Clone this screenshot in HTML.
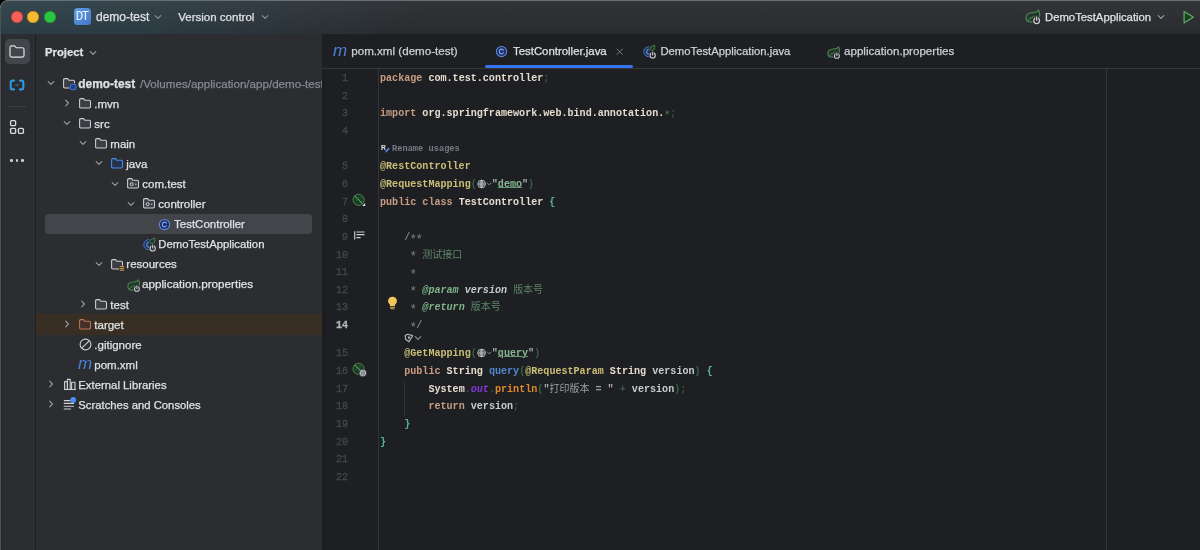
<!DOCTYPE html>
<html><head><meta charset="utf-8"><title>demo-test</title>
<style>
*{box-sizing:border-box;margin:0;padding:0}
html,body{width:1200px;height:550px;overflow:hidden;background:#1e1f22}
body{position:relative;font-family:"Liberation Sans","Noto Sans CJK SC",sans-serif;font-size:11.5px;color:#dfe1e5}
.abs,.t,.row,.code,.ln,svg{position:absolute}
#w{position:absolute;left:0;top:0;width:1200px;height:550px;will-change:transform}
#title{left:0;top:0;width:1200px;height:33.6px;background:linear-gradient(180deg,rgba(255,255,255,.035),rgba(0,0,0,.05)),linear-gradient(90deg,#2f4149 0,#2e3d45 150px,#2c343a 300px,#2b2d30 420px)}
#stripe{left:0;top:34px;width:36px;height:516px;background:linear-gradient(90deg,#27282b 1px,#2b2d30 6px);border-right:1px solid #1e1f22}
#proj{left:36px;top:34px;width:286px;height:516px;background:#2b2d30}
#editor{left:322px;top:34px;width:878px;height:516px;background:#1e1f22}
.t{white-space:nowrap;line-height:20px;height:20px;-webkit-text-stroke:.25px}
.code{font-family:"Liberation Mono","Noto Sans CJK SC",monospace;font-size:10.08px;font-weight:bold;white-space:pre;left:380px;height:18px;line-height:18px;color:#e6ddd0}
.ln{font-family:"Liberation Mono",monospace;font-size:10px;color:#4e535b;-webkit-text-stroke:.3px;width:24px;text-align:right;left:324px;height:18px;line-height:18px}
.k{color:#c79d84}.a{color:#cbbf78}.b{color:#52b5a2}.v{color:#c8cbd0}.p{color:#33623f}.s{color:#3d5645}.q{color:#adb0b5}
.u{color:#86b592;text-decoration:underline;text-decoration-thickness:.8px;text-underline-offset:.3px;text-decoration-color:#6a9576}.m{color:#4f88d0}.o{color:#e08a2a}.f{color:#8538d8;font-style:italic}
.g{color:#9a9da3}.c{color:#7e8388}.d{color:#5c8567}.dt{color:#7db389;font-style:italic}.dv{color:#c5cace;font-style:italic}
.cj{font-size:10px;font-weight:normal}
.st{display:inline-block;width:6.048px;font-size:12.5px;line-height:1;position:relative;top:2.7px;left:-.7px;font-weight:normal}.s2{color:#3f7a4d}
.dim{color:#6f737a}
</style></head><body><div id="w">
<div id="title" class="abs"></div>
<div id="stripe" class="abs"></div>
<div id="proj" class="abs"></div>
<div id="editor" class="abs"></div>
<div class="abs" style="left:0;top:0;width:1200px;height:1px;background:#687073"></div>
<div class="abs" style="left:10.6px;top:10.8px;width:12px;height:12px;border-radius:50%;background:#f6605a;box-shadow:inset 0 0 0 .6px #a3352f"></div>
<div class="abs" style="left:27.4px;top:10.8px;width:12px;height:12px;border-radius:50%;background:#f6bb33;box-shadow:inset 0 0 0 .6px #a87c1c"></div>
<div class="abs" style="left:44.1px;top:10.8px;width:12px;height:12px;border-radius:50%;background:#2ac541;box-shadow:inset 0 0 0 .6px #1b8a2b"></div>
<div class="abs" style="left:74px;top:8px;width:17px;height:17px;border-radius:3.5px;background:linear-gradient(135deg,#5b9ee2,#4878c6);color:#eef3fa;font:12.4px/19.6px 'Liberation Mono',monospace;text-align:center;letter-spacing:-1.4px;text-indent:-1.4px">DT</div>
<div class="t" style="left:96px;top:6.7px;font-size:12px">demo-test</div>
<svg style="left:153px;top:12.0px" width="10" height="10" viewBox="0 0 10 10"><path d="M2.2 3.7 L5 6.4 L7.8 3.7" fill="none" stroke="#8f9399" stroke-width="1.1" stroke-linecap="round" stroke-linejoin="round"/></svg>
<div class="t" style="left:178.3px;top:6.7px;font-size:11.5px">Version control</div>
<svg style="left:260px;top:12.0px" width="10" height="10" viewBox="0 0 10 10"><path d="M2.2 3.7 L5 6.4 L7.8 3.7" fill="none" stroke="#8f9399" stroke-width="1.1" stroke-linecap="round" stroke-linejoin="round"/></svg>
<div class="t" style="left:1045px;top:6.7px;font-size:11.3px">DemoTestApplication</div>
<svg style="left:1156px;top:12.0px" width="10" height="10" viewBox="0 0 10 10"><path d="M2.2 3.7 L5 6.4 L7.8 3.7" fill="none" stroke="#9da0a8" stroke-width="1.1" stroke-linecap="round" stroke-linejoin="round"/></svg>
<svg style="left:1182px;top:9.6px" width="14" height="14" viewBox="0 0 14 14"><path d="M2.1 1.6 L11.4 7.2 L2.1 12.8 Z" fill="#183f1e" stroke="#5a9b62" stroke-width="1.4" stroke-linejoin="round"/></svg>
<svg style="left:1024.6px;top:9.4px" width="16.5" height="16.5" viewBox="0 0 15 15"><path d="M12.3 0.9 C11.2 2.6 9.4 3.2 7 3.3 C3.7 3.4 0.9 5.1 0.9 8 C0.9 10.5 3 11.9 5.6 11.9 C9.6 11.9 13.2 9.6 13.4 5.6 C13.5 3.8 13.1 2.2 12.3 0.9 Z" fill="#21382a" stroke="#4c8452" stroke-width="1.15" stroke-linejoin="round"/><path d="M2.6 10.7 C4 8.5 6.6 7.2 9.6 6.8" fill="none" stroke="#4c8452" stroke-width="1" stroke-linecap="round"/><circle cx="10.6" cy="10.4" r="3.9" fill="#2b2d30"/><circle cx="10.6" cy="10.6" r="2.6" fill="none" stroke="#ced0d6" stroke-width="1.1"/><path d="M10.6 6.6 V10" stroke="#2b2d30" stroke-width="2.6"/><path d="M10.6 7.2 V10.2" stroke="#ced0d6" stroke-width="1.1" stroke-linecap="round"/></svg>
<div class="abs" style="left:4.5px;top:38.8px;width:25px;height:25.2px;border-radius:5px;background:#43454a"></div>
<svg style="left:9px;top:44.8px" width="16" height="13" viewBox="0 0 16 14" preserveAspectRatio="none"><path d="M1 2.6 C1 1.7 1.7 1 2.6 1 H5.6 L7.4 3 H13.4 C14.3 3 15 3.7 15 4.6 V11.4 C15 12.3 14.3 13 13.4 13 H2.6 C1.7 13 1 12.3 1 11.4 Z" fill="none" stroke="#dfe1e5" stroke-width="1.2" stroke-linejoin="round"/></svg>
<svg style="left:9px;top:78.6px" width="16" height="12" viewBox="0 0 16 12"><g fill="none" stroke="#2f97dc" stroke-width="2.1" stroke-linecap="round" stroke-linejoin="round"><path d="M5 1.6 H3.4 C2.4 1.6 1.7 2.3 1.7 3.3 V8.7 C1.7 9.7 2.4 10.4 3.4 10.4 H5"/><path d="M11 1.6 H12.6 C13.6 1.6 14.3 2.3 14.3 3.3 V8.7 C14.3 9.7 13.6 10.4 12.6 10.4 H11"/></g><path d="M6.8 6 H9.2" stroke="#2a6fa3" stroke-width="1.3" stroke-linecap="round"/></svg>
<div class="abs" style="left:8px;top:106px;width:18px;height:1px;background:#3c3e43"></div>
<svg style="left:9px;top:119px" width="16" height="16" viewBox="0 0 16 16"><g fill="none" stroke="#d6d8dd" stroke-width="1.4"><rect x="1.6" y="1.6" width="5" height="5" rx="1.2"/><rect x="1.6" y="9.4" width="5" height="5" rx="1.2"/><rect x="9.4" y="9.4" width="5" height="5" rx="1.2"/></g></svg>
<div class="abs" style="left:10.4px;top:159.2px;width:2.7px;height:2.7px;border-radius:50%;background:#ced0d6"></div>
<div class="abs" style="left:15.7px;top:159.2px;width:2.7px;height:2.7px;border-radius:50%;background:#ced0d6"></div>
<div class="abs" style="left:21.0px;top:159.2px;width:2.7px;height:2.7px;border-radius:50%;background:#ced0d6"></div>
<div class="t" style="left:45px;top:42.0px;font-weight:bold;font-size:11.3px;color:#dfe1e5">Project</div>
<svg style="left:88px;top:47.5px" width="10" height="10" viewBox="0 0 10 10"><path d="M2.2 3.7 L5 6.4 L7.8 3.7" fill="none" stroke="#9da0a8" stroke-width="1.1" stroke-linecap="round" stroke-linejoin="round"/></svg>
<div class="abs" style="left:44.5px;top:213.8px;width:267.3px;height:20px;border-radius:3.5px;background:#43454a"></div>
<div class="abs" style="left:36px;top:314.3px;width:286px;height:20.6px;background:#392e23"></div>
<svg style="left:46px;top:78.1px" width="10" height="10" viewBox="0 0 10 10"><path d="M2.2 3.7 L5 6.4 L7.8 3.7" fill="none" stroke="#9da0a8" stroke-width="1.1" stroke-linecap="round" stroke-linejoin="round"/></svg>
<svg style="left:63px;top:77.8px" width="14" height="13" viewBox="0 0 14 13"><path d="M0.6 1.8 Q0.6 0.6 1.8 0.6 H4.5 L6 2.3 H10.3 Q11.5 2.3 11.5 3.5 V8.8 Q11.5 10 10.3 10 H1.8 Q0.6 10 0.6 8.8 Z" fill="#3c3e43" stroke="#ced0d6" stroke-width="1.05" stroke-linejoin="round"/><rect x="7.2" y="6" width="6" height="6" rx="2" fill="#2b2d30" stroke="#2b2d30" stroke-width="1.6"/><rect x="7.4" y="6.2" width="5.6" height="5.6" rx="1.8" fill="#1f3f86" stroke="#3f78d8" stroke-width="1.1"/></svg>
<div class="t" style="left:78.3px;top:73.6px;font-size:11.9px"><b>demo-test</b></div>
<div class="t" style="left:140px;top:73.6px;color:#868a91;font-size:11.6px;width:182px;overflow:hidden">/Volumes/application/app/demo-test</div>
<svg style="left:62px;top:98.2px" width="10" height="10" viewBox="0 0 10 10"><path d="M3.7 2.2 L6.4 5 L3.7 7.8" fill="none" stroke="#9da0a8" stroke-width="1.1" stroke-linecap="round" stroke-linejoin="round"/></svg>
<svg style="left:79px;top:97.9px" width="14" height="13" viewBox="0 0 14 13"><path d="M0.6 1.8 Q0.6 0.6 1.8 0.6 H4.5 L6 2.3 H10.3 Q11.5 2.3 11.5 3.5 V8.8 Q11.5 10 10.3 10 H1.8 Q0.6 10 0.6 8.8 Z" fill="#3c3e43" stroke="#ced0d6" stroke-width="1.05" stroke-linejoin="round"/></svg>
<div class="t" style="left:94.3px;top:93.7px;">.mvn</div>
<svg style="left:62px;top:118.3px" width="10" height="10" viewBox="0 0 10 10"><path d="M2.2 3.7 L5 6.4 L7.8 3.7" fill="none" stroke="#9da0a8" stroke-width="1.1" stroke-linecap="round" stroke-linejoin="round"/></svg>
<svg style="left:79px;top:118.0px" width="14" height="13" viewBox="0 0 14 13"><path d="M0.6 1.8 Q0.6 0.6 1.8 0.6 H4.5 L6 2.3 H10.3 Q11.5 2.3 11.5 3.5 V8.8 Q11.5 10 10.3 10 H1.8 Q0.6 10 0.6 8.8 Z" fill="#3c3e43" stroke="#ced0d6" stroke-width="1.05" stroke-linejoin="round"/></svg>
<div class="t" style="left:94.3px;top:113.8px;">src</div>
<svg style="left:78px;top:138.3px" width="10" height="10" viewBox="0 0 10 10"><path d="M2.2 3.7 L5 6.4 L7.8 3.7" fill="none" stroke="#9da0a8" stroke-width="1.1" stroke-linecap="round" stroke-linejoin="round"/></svg>
<svg style="left:95px;top:138.0px" width="14" height="13" viewBox="0 0 14 13"><path d="M0.6 1.8 Q0.6 0.6 1.8 0.6 H4.5 L6 2.3 H10.3 Q11.5 2.3 11.5 3.5 V8.8 Q11.5 10 10.3 10 H1.8 Q0.6 10 0.6 8.8 Z" fill="#3c3e43" stroke="#ced0d6" stroke-width="1.05" stroke-linejoin="round"/></svg>
<div class="t" style="left:110.3px;top:133.8px;">main</div>
<svg style="left:94px;top:158.4px" width="10" height="10" viewBox="0 0 10 10"><path d="M2.2 3.7 L5 6.4 L7.8 3.7" fill="none" stroke="#9da0a8" stroke-width="1.1" stroke-linecap="round" stroke-linejoin="round"/></svg>
<svg style="left:111px;top:158.1px" width="14" height="13" viewBox="0 0 14 13"><path d="M0.6 1.8 Q0.6 0.6 1.8 0.6 H4.5 L6 2.3 H10.3 Q11.5 2.3 11.5 3.5 V8.8 Q11.5 10 10.3 10 H1.8 Q0.6 10 0.6 8.8 Z" fill="#25324d" stroke="#4b8df0" stroke-width="1.05" stroke-linejoin="round"/></svg>
<div class="t" style="left:126.3px;top:153.9px;">java</div>
<svg style="left:110px;top:178.5px" width="10" height="10" viewBox="0 0 10 10"><path d="M2.2 3.7 L5 6.4 L7.8 3.7" fill="none" stroke="#9da0a8" stroke-width="1.1" stroke-linecap="round" stroke-linejoin="round"/></svg>
<svg style="left:127px;top:178.2px" width="14" height="13" viewBox="0 0 14 13"><path d="M0.6 1.8 Q0.6 0.6 1.8 0.6 H4.5 L6 2.3 H10.3 Q11.5 2.3 11.5 3.5 V8.8 Q11.5 10 10.3 10 H1.8 Q0.6 10 0.6 8.8 Z" fill="#3c3e43" stroke="#ced0d6" stroke-width="1.05" stroke-linejoin="round"/><circle cx="4.7" cy="6.2" r="1.5" fill="none" stroke="#ced0d6" stroke-width="1"/><circle cx="8.8" cy="6.3" r=".7" fill="#ced0d6"/></svg>
<div class="t" style="left:142.3px;top:174.0px;">com.test</div>
<svg style="left:126px;top:198.6px" width="10" height="10" viewBox="0 0 10 10"><path d="M2.2 3.7 L5 6.4 L7.8 3.7" fill="none" stroke="#9da0a8" stroke-width="1.1" stroke-linecap="round" stroke-linejoin="round"/></svg>
<svg style="left:143px;top:198.3px" width="14" height="13" viewBox="0 0 14 13"><path d="M0.6 1.8 Q0.6 0.6 1.8 0.6 H4.5 L6 2.3 H10.3 Q11.5 2.3 11.5 3.5 V8.8 Q11.5 10 10.3 10 H1.8 Q0.6 10 0.6 8.8 Z" fill="#3c3e43" stroke="#ced0d6" stroke-width="1.05" stroke-linejoin="round"/><circle cx="4.7" cy="6.2" r="1.5" fill="none" stroke="#ced0d6" stroke-width="1"/><circle cx="8.8" cy="6.3" r=".7" fill="#ced0d6"/></svg>
<div class="t" style="left:158.3px;top:194.1px;">controller</div>
<svg style="left:157.9px;top:217.5px" width="13" height="13" viewBox="0 0 13 13"><circle cx="6.5" cy="6.5" r="5.1" fill="#1a2f68" stroke="#6389d6" stroke-width="1.05"/><path d="M8.4 5.2 C8 4.5 7.4 4.1 6.6 4.1 C5.3 4.1 4.4 5.1 4.4 6.5 C4.4 7.9 5.3 8.9 6.6 8.9 C7.4 8.9 8 8.5 8.4 7.8" fill="none" stroke="#86a6e6" stroke-width="1.1" stroke-linecap="round"/></svg>
<div class="t" style="left:174px;top:214.2px;">TestController</div>
<svg style="left:143px;top:236.7px" width="16" height="16" viewBox="0 0 16 16"><circle cx="5.8" cy="7.7" r="5" fill="#243152" stroke="#4178d6" stroke-width="1"/><path d="M7.6 6.3 C7.2 5.6 6.6 5.3 5.9 5.3 C4.7 5.3 3.8 6.3 3.8 7.7 C3.8 9.1 4.7 10.1 5.9 10.1 C6.6 10.1 7.2 9.8 7.6 9.1" fill="none" stroke="#5f97ee" stroke-width="1.1" stroke-linecap="round"/><path d="M8 2.6 C9.4 2.4 10.6 1.8 11.4 0.8 C12.3 2.6 12 4.8 10.6 6.1 C9.4 7.1 7.7 6.7 7.1 5.5 C6.6 4.5 7 3.2 8 2.6 Z" fill="#21382a" stroke="#2b2d30" stroke-width="2.4"/><path d="M8 2.6 C9.4 2.4 10.6 1.8 11.4 0.8 C12.3 2.6 12 4.8 10.6 6.1 C9.4 7.1 7.7 6.7 7.1 5.5 C6.6 4.5 7 3.2 8 2.6 Z" fill="#21382a" stroke="#4c8452" stroke-width=".9" stroke-linejoin="round"/><circle cx="9.7" cy="11.2" r="3.9" fill="#2b2d30"/><circle cx="9.7" cy="11.4" r="2.6" fill="none" stroke="#ced0d6" stroke-width="1.1"/><path d="M9.7 7.4 V10.8" stroke="#2b2d30" stroke-width="2.6"/><path d="M9.7 8 V11" stroke="#ced0d6" stroke-width="1.1" stroke-linecap="round"/></svg>
<div class="t" style="left:158.3px;top:234.2px;font-size:11.3px">DemoTestApplication</div>
<svg style="left:94px;top:258.8px" width="10" height="10" viewBox="0 0 10 10"><path d="M2.2 3.7 L5 6.4 L7.8 3.7" fill="none" stroke="#9da0a8" stroke-width="1.1" stroke-linecap="round" stroke-linejoin="round"/></svg>
<svg style="left:111px;top:258.5px" width="14" height="13" viewBox="0 0 14 13"><path d="M0.6 1.8 Q0.6 0.6 1.8 0.6 H4.5 L6 2.3 H10.3 Q11.5 2.3 11.5 3.5 V8.8 Q11.5 10 10.3 10 H1.8 Q0.6 10 0.6 8.8 Z" fill="#3c3e43" stroke="#ced0d6" stroke-width="1.05" stroke-linejoin="round"/><rect x="8" y="6.6" width="5.6" height="5.6" fill="#2b2d30"/><g stroke="#d9a343" stroke-width="1"><path d="M8.6 7.6 H13.2 M8.6 9.4 H13.2 M8.6 11.2 H13.2"/></g></svg>
<div class="t" style="left:126.3px;top:254.3px;">resources</div>
<svg style="left:127px;top:278.8px" width="14" height="14" viewBox="0 0 15 15"><path d="M12.3 0.9 C11.2 2.6 9.4 3.2 7 3.3 C3.7 3.4 0.9 5.1 0.9 8 C0.9 10.5 3 11.9 5.6 11.9 C9.6 11.9 13.2 9.6 13.4 5.6 C13.5 3.8 13.1 2.2 12.3 0.9 Z" fill="#21382a" stroke="#4c8452" stroke-width="1.15" stroke-linejoin="round"/><path d="M2.6 10.7 C4 8.5 6.6 7.2 9.6 6.8" fill="none" stroke="#4c8452" stroke-width="1" stroke-linecap="round"/><circle cx="10.6" cy="10.4" r="3.9" fill="#2b2d30"/><circle cx="10.6" cy="10.6" r="2.6" fill="none" stroke="#ced0d6" stroke-width="1.1"/><path d="M10.6 6.6 V10" stroke="#2b2d30" stroke-width="2.6"/><path d="M10.6 7.2 V10.2" stroke="#ced0d6" stroke-width="1.1" stroke-linecap="round"/></svg>
<div class="t" style="left:142px;top:274.4px;font-size:11.7px">application.properties</div>
<svg style="left:78px;top:299.0px" width="10" height="10" viewBox="0 0 10 10"><path d="M3.7 2.2 L6.4 5 L3.7 7.8" fill="none" stroke="#9da0a8" stroke-width="1.1" stroke-linecap="round" stroke-linejoin="round"/></svg>
<svg style="left:95px;top:298.7px" width="14" height="13" viewBox="0 0 14 13"><path d="M0.6 1.8 Q0.6 0.6 1.8 0.6 H4.5 L6 2.3 H10.3 Q11.5 2.3 11.5 3.5 V8.8 Q11.5 10 10.3 10 H1.8 Q0.6 10 0.6 8.8 Z" fill="#3c3e43" stroke="#ced0d6" stroke-width="1.05" stroke-linejoin="round"/></svg>
<div class="t" style="left:110.3px;top:294.5px;">test</div>
<svg style="left:62px;top:319.1px" width="10" height="10" viewBox="0 0 10 10"><path d="M3.7 2.2 L6.4 5 L3.7 7.8" fill="none" stroke="#9da0a8" stroke-width="1.1" stroke-linecap="round" stroke-linejoin="round"/></svg>
<svg style="left:79px;top:318.8px" width="14" height="13" viewBox="0 0 14 13"><path d="M0.6 1.8 Q0.6 0.6 1.8 0.6 H4.5 L6 2.3 H10.3 Q11.5 2.3 11.5 3.5 V8.8 Q11.5 10 10.3 10 H1.8 Q0.6 10 0.6 8.8 Z" fill="#43312a" stroke="#bb7850" stroke-width="1.05" stroke-linejoin="round"/></svg>
<div class="t" style="left:94.3px;top:314.6px;">target</div>
<svg style="left:79px;top:337.6px" width="13" height="13" viewBox="0 0 13 13"><circle cx="6.5" cy="6.5" r="5.4" fill="none" stroke="#ced0d6" stroke-width="1.1"/><path d="M2.8 10.2 L10.2 2.8" stroke="#ced0d6" stroke-width="1.1"/></svg>
<div class="t" style="left:94.3px;top:334.6px;">.gitignore</div>
<div class="t" style="left:78px;top:354.2px;font:italic 17px/20px 'Liberation Sans',sans-serif;color:#4c7fd8;letter-spacing:-.5px;-webkit-text-stroke:0">m</div>
<div class="t" style="left:94.3px;top:354.7px;">pom.xml</div>
<svg style="left:46px;top:379.3px" width="10" height="10" viewBox="0 0 10 10"><path d="M3.7 2.2 L6.4 5 L3.7 7.8" fill="none" stroke="#9da0a8" stroke-width="1.1" stroke-linecap="round" stroke-linejoin="round"/></svg>
<svg style="left:63px;top:377.8px" width="14" height="13" viewBox="0 0 14 13"><g fill="none" stroke="#ced0d6" stroke-width="1.1" stroke-linejoin="round"><path d="M1 11.5 H13"/><rect x="1.6" y="3.6" width="2.8" height="7.9"/><rect x="4.4" y="1.4" width="2.8" height="10.1"/><rect x="8.6" y="4.2" width="3.4" height="7.3"/></g></svg>
<div class="t" style="left:78.3px;top:374.8px;font-size:11.35px">External Libraries</div>
<svg style="left:46px;top:399.4px" width="10" height="10" viewBox="0 0 10 10"><path d="M3.7 2.2 L6.4 5 L3.7 7.8" fill="none" stroke="#9da0a8" stroke-width="1.1" stroke-linecap="round" stroke-linejoin="round"/></svg>
<svg style="left:63px;top:396.9px" width="14" height="14" viewBox="0 0 14 14"><g stroke="#ced0d6" stroke-width="1.1" stroke-linecap="round"><path d="M1.2 3.6 H7 M1.2 6.4 H10.6 M1.2 9.2 H10.6 M1.2 12 H7.6"/></g><circle cx="10.2" cy="3" r="2.9" fill="#4b8df0"/></svg>
<div class="t" style="left:78.3px;top:394.9px;font-size:11.3px">Scratches and Consoles</div>
<div class="abs" style="left:322px;top:68px;width:878px;height:1px;background:#35373b"></div>
<div class="abs" style="left:484.5px;top:65px;width:148.5px;height:3px;border-radius:1.5px;background:#3574f0"></div>
<div class="t" style="left:333px;top:40.5px;font:italic 17px/20px 'Liberation Sans',sans-serif;color:#4c7fd8;letter-spacing:-.5px;-webkit-text-stroke:0">m</div>
<div class="t" style="left:351.3px;top:41.1px;font-size:11.6px;color:#ced0d6">pom.xml (demo-test)</div>
<svg style="left:494.7px;top:44.7px" width="13" height="13" viewBox="0 0 13 13"><circle cx="6.5" cy="6.5" r="5.1" fill="#1a2f68" stroke="#6389d6" stroke-width="1.05"/><path d="M8.4 5.2 C8 4.5 7.4 4.1 6.6 4.1 C5.3 4.1 4.4 5.1 4.4 6.5 C4.4 7.9 5.3 8.9 6.6 8.9 C7.4 8.9 8 8.5 8.4 7.8" fill="none" stroke="#86a6e6" stroke-width="1.1" stroke-linecap="round"/></svg>
<div class="t" style="left:513px;top:41.1px;font-size:11.4px;color:#dfe1e5">TestController.java</div>
<svg style="left:616px;top:48px" width="8" height="8" viewBox="0 0 8 8"><path d="M1 1 L6.4 6.4 M6.4 1 L1 6.4" stroke="#767a81" stroke-width="1" stroke-linecap="round"/></svg>
<svg style="left:643px;top:44.0px" width="16" height="16" viewBox="0 0 16 16"><circle cx="5.8" cy="7.7" r="5" fill="#243152" stroke="#4178d6" stroke-width="1"/><path d="M7.6 6.3 C7.2 5.6 6.6 5.3 5.9 5.3 C4.7 5.3 3.8 6.3 3.8 7.7 C3.8 9.1 4.7 10.1 5.9 10.1 C6.6 10.1 7.2 9.8 7.6 9.1" fill="none" stroke="#5f97ee" stroke-width="1.1" stroke-linecap="round"/><path d="M8 2.6 C9.4 2.4 10.6 1.8 11.4 0.8 C12.3 2.6 12 4.8 10.6 6.1 C9.4 7.1 7.7 6.7 7.1 5.5 C6.6 4.5 7 3.2 8 2.6 Z" fill="#21382a" stroke="#1e1f22" stroke-width="2.4"/><path d="M8 2.6 C9.4 2.4 10.6 1.8 11.4 0.8 C12.3 2.6 12 4.8 10.6 6.1 C9.4 7.1 7.7 6.7 7.1 5.5 C6.6 4.5 7 3.2 8 2.6 Z" fill="#21382a" stroke="#4c8452" stroke-width=".9" stroke-linejoin="round"/><circle cx="9.7" cy="11.2" r="3.9" fill="#1e1f22"/><circle cx="9.7" cy="11.4" r="2.6" fill="none" stroke="#ced0d6" stroke-width="1.1"/><path d="M9.7 7.4 V10.8" stroke="#1e1f22" stroke-width="2.6"/><path d="M9.7 8 V11" stroke="#ced0d6" stroke-width="1.1" stroke-linecap="round"/></svg>
<div class="t" style="left:660.4px;top:41.1px;font-size:11.3px;color:#ced0d6">DemoTestApplication.java</div>
<svg style="left:826.5px;top:45.5px" width="14" height="14" viewBox="0 0 15 15"><path d="M12.3 0.9 C11.2 2.6 9.4 3.2 7 3.3 C3.7 3.4 0.9 5.1 0.9 8 C0.9 10.5 3 11.9 5.6 11.9 C9.6 11.9 13.2 9.6 13.4 5.6 C13.5 3.8 13.1 2.2 12.3 0.9 Z" fill="#21382a" stroke="#4c8452" stroke-width="1.15" stroke-linejoin="round"/><path d="M2.6 10.7 C4 8.5 6.6 7.2 9.6 6.8" fill="none" stroke="#4c8452" stroke-width="1" stroke-linecap="round"/><circle cx="10.6" cy="10.4" r="3.9" fill="#1e1f22"/><circle cx="10.6" cy="10.6" r="2.6" fill="none" stroke="#ced0d6" stroke-width="1.1"/><path d="M10.6 6.6 V10" stroke="#1e1f22" stroke-width="2.6"/><path d="M10.6 7.2 V10.2" stroke="#ced0d6" stroke-width="1.1" stroke-linecap="round"/></svg>
<div class="t" style="left:844px;top:41.1px;font-size:11.6px;color:#ced0d6">application.properties</div>
<div class="abs" style="left:378px;top:69px;width:1px;height:481px;background:#313438"></div>
<div class="abs" style="left:1106px;top:69px;width:1px;height:481px;background:#313438"></div>
<div class="ln" style="top:70.1px;color:#43474e">1</div>
<div class="ln" style="top:87.7px;color:#43474e">2</div>
<div class="ln" style="top:105.4px;color:#43474e">3</div>
<div class="ln" style="top:123.0px;color:#43474e">4</div>
<div class="ln" style="top:158.3px;color:#43474e">5</div>
<div class="ln" style="top:175.9px;color:#43474e">6</div>
<div class="ln" style="top:193.6px;color:#43474e">7</div>
<div class="ln" style="top:211.2px;color:#43474e">8</div>
<div class="ln" style="top:228.9px;color:#43474e">9</div>
<div class="ln" style="top:246.5px;color:#43474e">10</div>
<div class="ln" style="top:264.1px;color:#43474e">11</div>
<div class="ln" style="top:281.8px;color:#43474e">12</div>
<div class="ln" style="top:299.4px;color:#43474e">13</div>
<div class="ln" style="top:317.1px;color:#b4b7bd;font-weight:bold">14</div>
<div class="ln" style="top:345.4px;color:#43474e">15</div>
<div class="ln" style="top:363.0px;color:#43474e">16</div>
<div class="ln" style="top:380.7px;color:#43474e">17</div>
<div class="ln" style="top:398.3px;color:#43474e">18</div>
<div class="ln" style="top:416.0px;color:#43474e">19</div>
<div class="ln" style="top:433.6px;color:#43474e">20</div>
<div class="ln" style="top:451.2px;color:#43474e">21</div>
<div class="ln" style="top:468.9px;color:#43474e">22</div>
<div class="code" style="left:380.0px;top:70.1px"><span class="k">package</span> com.test.controller<span class="s">;</span></div>
<div class="code" style="left:380.0px;top:105.4px"><span class="k">import</span> org.springframework.web.bind.annotation.<span class="s2"><span class="st">*</span></span><span class="s">;</span></div>
<div class="t" style="left:392px;top:138.6px;font:bold 8.7px/20px 'Liberation Mono',monospace;color:#767a82;-webkit-text-stroke:0">Rename usages</div>
<svg style="left:380.5px;top:143.5px" width="10" height="10" viewBox="0 0 10 10"><text x="0" y="6" font-family="Liberation Sans,sans-serif" font-weight="bold" font-size="6.8" fill="#dfe1e5">R</text><path d="M4.2 8.8 L4.6 6.8 L7.6 3.6 L8.8 4.8 L5.8 8 Z" fill="#4f86e8"/></svg>
<div class="code" style="left:380.0px;top:158.3px"><span class="a">@RestController</span></div>
<div class="code" style="left:380.0px;top:175.9px"><span class="a">@RequestMapping</span><span class="p">(</span><svg style="position:relative;display:inline-block;vertical-align:-2px" width="15" height="10" viewBox="0 0 15 10"><circle cx="4.6" cy="5" r="3.9" fill="#474a50" stroke="#b9bcc2" stroke-width=".8"/><path d="M0.8 5 H8.4 M4.6 1.1 V8.9 M4.6 1.1 C2.7 3 2.7 7 4.6 8.9 M4.6 1.1 C6.5 3 6.5 7 4.6 8.9" fill="none" stroke="#d3d5da" stroke-width=".65"/><path d="M10.3 3.9 L12.2 5.9 L14.1 3.9" fill="none" stroke="#868a91" stroke-width="1" stroke-linecap="round" stroke-linejoin="round"/></svg><span class="q">"</span><span class="u">demo</span><span class="q">"</span><span class="p">)</span></div>
<div class="code" style="left:380.0px;top:193.6px"><span class="k">public class</span> TestController <span class="b">{</span></div>
<div class="code" style="left:404.2px;top:228.9px"><span class="c">/<span class="st">*</span><span class="st">*</span></span></div>
<div class="code" style="left:404.2px;top:246.5px"><span class="c"> <span class="st">*</span> </span><span class="cj d">测试接口</span></div>
<div class="code" style="left:404.2px;top:264.1px"><span class="c"> <span class="st">*</span></span></div>
<div class="code" style="left:404.2px;top:281.8px"><span class="c"> <span class="st">*</span> </span><span class="dt">@param</span> <span class="dv">version</span> <span class="cj d">版本号</span></div>
<div class="code" style="left:404.2px;top:299.4px"><span class="c"> <span class="st">*</span> </span><span class="dt">@return</span> <span class="cj d">版本号</span></div>
<div class="code" style="left:404.2px;top:317.1px"><span class="c"> <span class="st">*</span>/</span></div>
<svg style="left:403.5px;top:333px" width="10" height="10" viewBox="0 0 10 10"><path d="M1.2 2.4 L3.6 1.2 L8.6 2.6 L5 8.8 L1.6 6.2 Z" fill="none" stroke="#b4b7bd" stroke-width="1.1" stroke-linejoin="round"/><path d="M3.6 3.6 L6.4 3.8 L4.8 6.4 Z" fill="#c4c7cc"/></svg>
<svg style="left:412.6px;top:333.0px" width="10" height="10" viewBox="0 0 10 10"><path d="M2.2 3.7 L5 6.4 L7.8 3.7" fill="none" stroke="#8a8e95" stroke-width="1.1" stroke-linecap="round" stroke-linejoin="round"/></svg>
<div class="code" style="left:404.2px;top:345.4px"><span class="a">@GetMapping</span><span class="p">(</span><svg style="position:relative;display:inline-block;vertical-align:-2px" width="15" height="10" viewBox="0 0 15 10"><circle cx="4.6" cy="5" r="3.9" fill="#474a50" stroke="#b9bcc2" stroke-width=".8"/><path d="M0.8 5 H8.4 M4.6 1.1 V8.9 M4.6 1.1 C2.7 3 2.7 7 4.6 8.9 M4.6 1.1 C6.5 3 6.5 7 4.6 8.9" fill="none" stroke="#d3d5da" stroke-width=".65"/><path d="M10.3 3.9 L12.2 5.9 L14.1 3.9" fill="none" stroke="#868a91" stroke-width="1" stroke-linecap="round" stroke-linejoin="round"/></svg><span class="q">"</span><span class="u">query</span><span class="q">"</span><span class="p">)</span></div>
<div class="code" style="left:404.2px;top:363.0px"><span class="k">public</span> String <span class="m">query</span><span class="p">(</span><span class="a">@RequestParam</span> String <span class="v">version</span><span class="p">)</span> <span class="b">{</span></div>
<div class="code" style="left:428.4px;top:380.7px">System<span class="s">.</span><span class="f">out</span><span class="s">.</span><span class="o">println</span><span class="p">(</span><span class="q">"</span><span class="cj g">打印版本</span><span class="g"> = </span><span class="q">"</span> <span class="s">+</span> <span class="v">version</span><span class="p">)</span><span class="s">;</span></div>
<div class="code" style="left:428.4px;top:398.3px"><span class="k">return</span> <span class="v">version</span><span class="s">;</span></div>
<div class="code" style="left:404.2px;top:416.0px"><span class="b">}</span></div>
<div class="code" style="left:380.0px;top:433.6px"><span class="b">}</span></div>
<div class="abs" style="left:404px;top:380.7px;width:1px;height:35.3px;background:#313438"></div>
<svg style="left:352px;top:192.8px" width="16" height="16" viewBox="0 0 16 16"><circle cx="6.6" cy="6.8" r="5.6" fill="#1b3c23" stroke="#46854f" stroke-width="1"/><path d="M2.9 3.2 L10.3 10.4" stroke="#5a9e63" stroke-width="1.1" stroke-linecap="round"/><path d="M4.2 8.2 C5 5.6 7 4.4 9.4 4.4" fill="none" stroke="#356c3f" stroke-width=".8"/><path d="M10.2 13 H13.2 V10 Z" fill="#e6e8eb"/></svg>
<svg style="left:352px;top:362.2px" width="16" height="16" viewBox="0 0 16 16"><circle cx="6.6" cy="6.8" r="5.6" fill="#1b3c23" stroke="#46854f" stroke-width="1"/><path d="M2.9 3.2 L10.3 10.4" stroke="#5a9e63" stroke-width="1.1" stroke-linecap="round"/><path d="M4.2 8.2 C5 5.6 7 4.4 9.4 4.4" fill="none" stroke="#356c3f" stroke-width=".8"/><circle cx="10.8" cy="11" r="3.7" fill="#cfd2d7" stroke="#1e1f22" stroke-width=".7"/><path d="M8.6 10.1 H13 M8.6 12 H13" stroke="#4a4d53" stroke-width=".8"/><ellipse cx="10.8" cy="11" rx="1.4" ry="3" fill="none" stroke="#6a6d73" stroke-width=".5"/></svg>
<svg style="left:354px;top:231.0px" width="11" height="9" viewBox="0 0 11 9"><path d="M0.7 0.2 V8.4 M2.4 1 H10.6 M2.4 3.6 H10.6 M2.4 6.6 H6.6" stroke="#ced0d6" stroke-width="1.1"/></svg>
<svg style="left:387px;top:295.6px" width="11" height="14.5" viewBox="0 0 11 15"><path d="M5.5 0.8 C2.8 0.8 0.9 2.8 0.9 5.2 C0.9 6.9 1.9 8 2.9 9 V10.4 H8.1 V9 C9.1 8 10.1 6.9 10.1 5.2 C10.1 2.8 8.2 0.8 5.5 0.8 Z" fill="#f2c55c"/><path d="M3.2 11.6 H7.8 M3.8 13.2 H7.2" stroke="#d8a94a" stroke-width="1.1" stroke-linecap="round"/></svg>
<div class="abs" style="left:322px;top:69px;width:4px;height:481px;background:#1c1d20"></div>
<div class="abs" style="left:0;top:0;width:1px;height:550px;background:#4e5054"></div>
<svg style="left:0;top:0" width="8" height="8" viewBox="0 0 8 8"><path d="M0 0 H8 C3.6 0 0 3.6 0 8 Z" fill="#000"/><path d="M0.5 8 C0.5 3.9 3.9 0.5 8 0.5" fill="none" stroke="#6a7376" stroke-width="1"/></svg>
</div></body></html>
